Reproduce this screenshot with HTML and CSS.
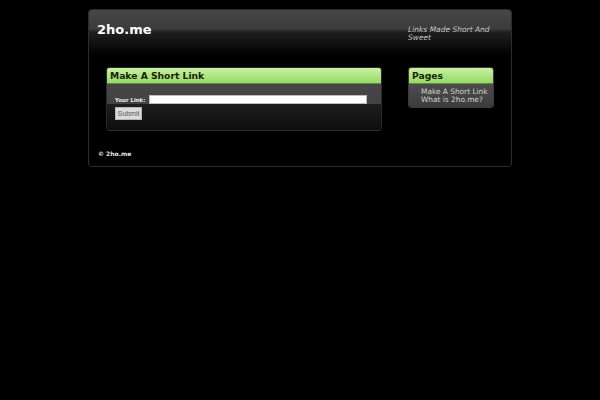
FILE: index.html
```html
<!DOCTYPE html>
<html>
<head>
<meta charset="utf-8">
<title>2ho.me</title>
<link rel="stylesheet" href="styles.css">
</head>
<body>
<div class="wrap">
  <div class="header">
    <div class="logo">2ho.me</div>
    <div class="tagline">Links Made Short And Sweet</div>
  </div>
  <div class="content">
    <div class="mainbox">
      <div class="boxhead">Make A Short Link</div>
      <div class="mainbody">
        <form class="linkrow">
          <label class="lbl">Your Link:</label>
          <input class="field" type="text">
        </form>
        <button class="submit" type="button">Submit</button>
      </div>
    </div>
    <div class="sidebox">
      <div class="boxhead">Pages</div>
      <div class="sidebody">
        <a class="plink" href="#">Make A Short Link</a>
        <a class="plink" href="#">What is 2ho.me?</a>
      </div>
    </div>
  </div>
  <div class="footer">© 2ho.me</div>
</div>
</body>
</html>
```

FILE: styles.css
```css
html, body {
  margin: 0;
  padding: 0;
  background: #000;
}
body {
  padding-top: 9px;
  font-family: "DejaVu Sans", Verdana, sans-serif;
}
.wrap {
  width: 422px;
  margin: 0 auto;
  border: 1px solid #2c2c2c;
  border-radius: 4px;
  background: linear-gradient(to bottom, #464646 0px, #3c3c3c 19px, #1f1f1f 22px, #0a0a0a 38px, #000 46px);
}
.header {
  height: 57px;
  display: flex;
  align-items: flex-start;
}
.logo {
  padding: 12px 0 0 8px;
  font-size: 13px;
  line-height: 15px;
  font-weight: bold;
  color: #fff;
}
.tagline {
  margin-left: auto;
  margin-right: 16px;
  width: 87px;
  padding-top: 16px;
  font-size: 7.5px;
  line-height: 8px;
  font-style: italic;
  color: #c8c8c8;
}
.content {
  display: flex;
  align-items: flex-start;
  gap: 26px;
  padding: 0 17px 0 17px;
}
.mainbox {
  width: 274px;
  border: 1px solid #2a2a2a;
  border-radius: 3px;
  overflow: hidden;
}
.sidebox {
  width: 84px;
  border: 1px solid #3a3a3a;
  border-radius: 3px;
  overflow: hidden;
}
.boxhead {
  height: 15px;
  line-height: 15px;
  padding-left: 3px;
  background: linear-gradient(to bottom, #c9f1a4 0%, #b2e686 45%, #98da66 100%);
  border-bottom: 1px solid #5f8f3c;
  font-size: 9.2px;
  font-weight: bold;
  color: #17260d;
}
.mainbody {
  height: 46px;
  box-sizing: border-box;
  padding: 11px 0 0 8px;
  background: linear-gradient(to bottom, #47474a 0px, #424245 20px, #1e1e1e 20px, #141414 36px, #0e0e0e 100%);
}
.linkrow {
  display: flex;
  align-items: center;
  gap: 4px;
  margin: 0;
}
.lbl {
  font-size: 5.4px;
  font-weight: bold;
  color: #f0f0f0;
}
.field {
  width: 218px;
  height: 9px;
  box-sizing: border-box;
  margin: 0;
  padding: 0;
  border: 1px solid #bdbdbd;
  background: #fff;
}
.submit {
  display: block;
  margin-top: 3px;
  width: 27px;
  height: 13px;
  padding: 0;
  border: 1px solid #b5b5b5;
  background: #dcdcdc;
  font-family: "Liberation Sans", Arial, sans-serif;
  font-size: 7px;
  color: #555;
}
.sidebody {
  padding: 4px 0 3px 12px;
  background: linear-gradient(to bottom, #4c4c4c, #3c3c3c);
}
.plink {
  display: block;
  font-size: 7.4px;
  line-height: 8px;
  color: #d2d2d2;
  text-decoration: none;
  white-space: nowrap;
}
.footer {
  margin-top: 19px;
  padding: 0 0 8px 9px;
  font-size: 6px;
  line-height: 8px;
  font-weight: bold;
  color: #e6e6e6;
}
```
